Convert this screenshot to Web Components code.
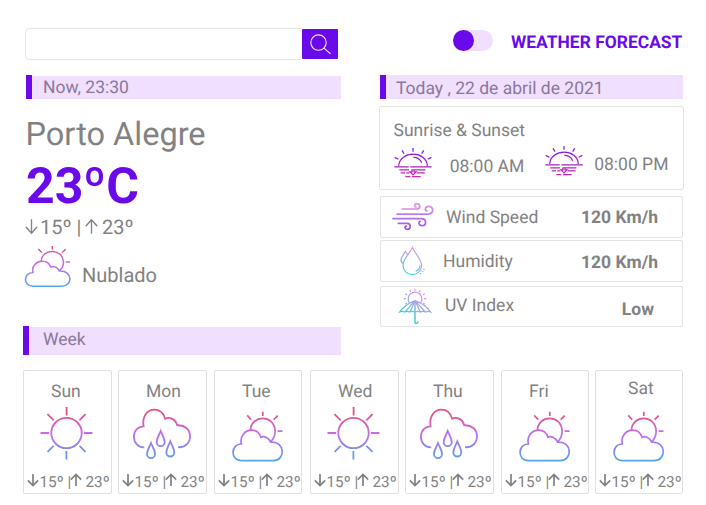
<!DOCTYPE html>
<html lang="pt-BR">
<head>
<meta charset="utf-8">
<title>Weather Forecast</title>
<style>
html,body{margin:0;background:#fff}
body{width:706px;height:505px;overflow:hidden;font-family:Roboto,sans-serif;color:#828282;text-rendering:geometricPrecision}
</style>
</head>
<body>
<weather-app></weather-app>
<script>
const define=(name,css,html)=>customElements.define(name,class extends HTMLElement{
  constructor(){
    super();
    const t=document.createElement('template');
    t.innerHTML=`<style>:host{display:block;box-sizing:border-box}${css}</style>${typeof html==='function'?html(this):html}`;
    this.attachShadow({mode:'open'}).append(t.content.cloneNode(true));
  }
});

const gradient=(id,stops,attrs='x1="0" y1="0" x2="0" y2="1"')=>
  `<defs><linearGradient id="${id}" gradientUnits="userSpaceOnUse" ${attrs}>${stops.map(([o,c])=>`<stop offset="${o}" stop-color="${c}"/>`).join('')}</linearGradient></defs>`;
const sky=gradient('g',[[0,'#e8507a'],[.15,'#e0568f'],[.5,'#c56cf0'],[.78,'#7f8cf0'],[1,'#4fa8ea']],'x1="0" y1="5" x2="0" y2="58"');
const aqua=[[0,'#ee8cf0'],[.45,'#a8a6e6'],[1,'#2bd8ce']];
const drop=(x,y)=>`<path d="M${x} ${y}C${x-1.6} ${y+4} ${x-4} ${y+7.4} ${x-4} ${y+11}a4 4.2 0 0 0 8 0C${x+4} ${y+7.4} ${x+1.6} ${y+4} ${x} ${y}Z"/>`;

const icons={
  sun:{box:'0 0 88 62',body:sky+`<g stroke="url(#g)" stroke-width="1.8"><circle cx="43.5" cy="30" r="15.2"/><path d="M43.6 4v8.6M43.4 48v8.6M17.5 30h8.6M60.8 30h8.6M24.4 11.2l6.4 6.2M62.6 11.2l-6.2 6.2M24.6 48.8l6-6M62.6 48.8l-6.2-6"/></g>`},
  rain:{box:'0 0 88 62',body:sky+`<g stroke="url(#g)" stroke-width="1.8"><path d="M26.2 44.3C20.3 44.6 15.9 39.7 15.9 33.8C15.9 27.6 20.4 23.3 25.6 23.4C23.8 13 29.5 6.7 36.3 6.7C41.5 6.7 45.5 10 47.2 15.7C51.8 13.6 57.8 16 59.2 22.3C66.5 21.6 72 26.6 72 33.2C72 40 67 44.8 60 44.2"/>${drop(33,40)}${drop(42.7,28)}${drop(52.3,38.3)}</g>`},
  cloud:{box:'0 0 88 62',body:sky+`<g stroke="url(#g)" stroke-width="1.7"><path d="M27.6 57.6C15.5 57.6 17 40.6 27.3 41C25.5 33 31.3 27.2 37.6 27.2C42 27.2 45.6 30 46.9 34.3C50.5 32.4 55 34.8 56.6 39.2C72 38.2 71.3 57.6 59.4 57.6ZM36.4 27.2C37 12 60 11 61.1 27.5C61.3 32 59.7 35.7 57 38.3M48.8 8.7v4.4M33.2 12.4l4 4.2M63.7 12.6l-4 4.1M63.7 28.2h4.8"/></g>`},
  dusk:{box:'70 140 116 94',body:gradient('g',[[0,'#7a1cf0'],[.5,'#a01ad0'],[1,'#cf28a8']],'x1="0" y1="143" x2="0" y2="232"')+
    `<g stroke="url(#g)" stroke-width="3.8"><path d="M84 197C87 150 168 150 170 197M128 171C139 171 149 177 153 187M71 199.5h43M119 199.5h64M86 209h29M122 209h42M90 218h13M107 218h9M138 218h24M104 229h15M124 229h26M127 143v11M94 150l6 10M159 150l-6 10M72 171l11 6M182 171l-11 6"/><path d="M124 210v5h-6l9 9 9-9h-6v-5"/></g>`},
  wind:{box:'64 36 130 86',body:gradient('g',[[0,'#e6a0d4'],[.45,'#bd7be6'],[1,'#8d4df6']],'x1="0" y1="36" x2="0" y2="122"')+
    `<g stroke="url(#g)" stroke-width="5.2" stroke-linecap="round"><path d="M98 57H142C154 56 153 41 142 41C134 41 133 50 139 51M82 72H177C193 71 193 49 177 49C166 49 164 62 172 63M70 86H156C172 86 171 107 157 107C147 107 145 96 152 94M86 100H112C125 100 125 118 113 118C105 118 104 108 110 108"/></g>`},
  humidity:{box:'88 168 82 90',body:gradient('g',aqua,'x1="150" y1="175" x2="110" y2="252"')+
    `<g stroke="url(#g)" stroke-width="3.4"><path d="M128 172C121 190 100 207 100 226A28 28 0 0 0 156 226C156 207 135 190 128 172ZM115 196L107 184C103 193 94 201 94 210C94 215 97 219 101 220M151 226C151 234 146 241 138 244M150 251h4M158 244h3M161 238h4M153 243h3"/></g>`},
  uv:{box:'84 294 102 112',body:gradient('g',aqua,'x1="160" y1="300" x2="105" y2="380"')+
    `<g stroke="url(#g)" stroke-width="3.6"><path d="M119 340A20.5 20.5 0 1 1 151 340M135 296v6M119 300l3 6M151 300l-3 6M106 311l5 4M164 311l-5 4M101 326h7M162 326h7M106 342l5-3M164 342l-5-3"/><path d="M135 332C115 340 98 352 89 366Q97 362 104 366Q112 362 119 366Q127 362 135 366Q143 362 151 366Q159 362 167 366Q175 362 182 366C174 352 156 340 135 332ZM135 332L105 366M135 332L120 366M135 332L151 366M135 332L166 366"/><path stroke-width="4.4" d="M135 332V396C135 402 144 402 144 394"/></g>`},
  down:{box:'0 0 12 14',body:'<path stroke="currentColor" stroke-width="var(--w,1.7)" d="M6 1v11.3M.8 7.3L6 12.5l5.2-5.2"/>'},
  up:{box:'0 0 12 14',body:'<path stroke="currentColor" stroke-width="var(--w,1.7)" d="M6 13V1.7M.8 6.7L6 1.5l5.2 5.2"/>'},
  search:{box:'0 0 36 30',body:'<g stroke="#f4eaff" stroke-width="1.1"><circle cx="16.5" cy="13.6" r="7.7"/><path d="M22 19.2l6.5 5.7"/></g>'}
};

define('wx-icon','svg{display:block;width:100%;height:100%;fill:none;overflow:visible}',
  el=>{const i=icons[el.getAttribute('name')];return `<svg viewBox="${el.getAttribute('box')||i.box}" preserveAspectRatio="none" aria-hidden="true">${i.body}</svg>`});

define('search-box',`:host{display:flex;width:313px;height:32px;margin-left:2px}
  .field{box-sizing:border-box;width:277px;border:1px solid #e6e6e6;border-right:0;border-radius:5px 0 0 5px}
  button{all:unset;width:36px;height:30px;margin-top:1px;background:#6a0aea;border-radius:1px}
  wx-icon{height:30px}`,'<div class="field"></div><button aria-label="Search"><wx-icon name="search"></wx-icon></button>');

define('section-bar',`:host{background:linear-gradient(#f0dfff,#f0dfff) 0 var(--inset,0px) no-repeat;border-left:6px solid #6a0aea;color:#8a7898;font-size:17.5px;line-height:22px;height:24px;white-space:pre}`,'<slot></slot>');

define('theme-toggle',`:host{flex:none;width:40px;height:21px;border-radius:11px;background:#f0dfff}
  i{display:block;width:21px;height:21px;border-radius:50%;background:#6a0aea}`,'<i></i>');

define('current-weather',`.city{font-size:32.5px;line-height:36px;margin:17px 0 0 2.5px}
  .temp{font-size:50px;line-height:50px;font-weight:700;color:#6a0aea;margin:10px 0 0 3px}
  .range{display:flex;font-size:20px;line-height:22px;margin:4px 0 0 2px;--w:1.2}
  .range wx-icon{flex:none;width:13px;height:17px;margin-top:2px}
  .range b{flex:none;font-weight:400}
  .sky{display:flex;margin-top:6.500px}
  .sky wx-icon{width:46px;height:42px;margin-left:2px}
  .sky p{font-size:20px;line-height:22px;margin:19.500px 0 0 11px}`,
  `<div class="city">Porto Alegre</div><div class="temp">23ºC</div>
  <div class="range"><wx-icon name="down"></wx-icon><b style="width:36.5px;margin-left:2px">15º</b><b style="width:8.5px">|</b><wx-icon name="up"></wx-icon><b style="margin-left:4px">23º</b></div>
  <div class="sky"><wx-icon name="cloud" box="18.5 7.5 51 51"></wx-icon><p>Nublado</p></div>`);

define('sun-card',`:host{height:84px;border:1px solid #e3e3e3;border-radius:3px;padding:13px 0 0 13.5px;font-size:17.5px;line-height:22px}
  .times{display:flex;align-items:flex-start;margin-top:3px}
  wx-icon{flex:none;width:38.7px;height:31.3px}`,
  `<div>Sunrise &amp; Sunset</div><div class="times"><wx-icon name="dusk" style="margin-top:2px"></wx-icon><span style="margin:11px 0 0 17.5px;width:95.3px">08:00 AM</span><wx-icon name="dusk"></wx-icon><span style="margin:9px 0 0 10.5px">08:00 PM</span></div>`);

define('metric-row',`:host{display:flex;width:303px;margin-left:1px;height:42px;border:1px solid #e3e3e3;border-radius:2px;font-size:17.5px;line-height:22px}
  .icon{width:var(--label)}
  .value{margin-left:auto;font-weight:700}`,
  '<div class="icon"><slot name="icon"></slot></div><slot></slot><div class="value"><slot name="value"></slot></div>');

define('day-card',`:host{width:89px;height:124px;border:1px solid #e1e1e1;border-radius:2px}
  .day{font-size:17.5px;line-height:22px;height:20px;padding:10px 0 0 27px}
  .icon{width:88px;height:62px;margin:2px 0 0 -1px}
  .range{display:flex;font-size:15.3px;line-height:18px;margin:7px 0 0 3px}
  .range wx-icon{flex:none;width:12px;height:14px;margin-top:1px}
  .range b{flex:none;font-weight:400;margin-top:.5px}`,
  el=>`<div class="day"><slot></slot></div><wx-icon class="icon" name="${el.getAttribute('sky')}"></wx-icon>
  <div class="range"><wx-icon name="down"></wx-icon><b style="width:28px;margin-left:.5px">15º</b><b style="width:.5px">|</b><wx-icon name="up" style="margin-left:2px"></wx-icon><b style="margin-left:3.5px">23º</b></div>`);

define('weather-app',`:host{padding:28px 22px 0 23px;width:706px;height:505px}
  .top{display:flex;justify-content:space-between;height:298px}
  .left{width:318px}
  .right{width:305px}
  .brand{display:flex;height:32px;padding-left:73.5px}
  h1{font-size:17.450px;line-height:22px;font-weight:700;color:#6a0aea;margin:4px 0 0 18.500px;white-space:nowrap}
  theme-toggle{margin-top:2px}
  .week{display:grid;grid-template-columns:95px 96px 96px 95px 96px 94px 88px;margin-top:15px}`,
  `<div class="top">
    <div class="left"><search-box></search-box>
      <section-bar style="margin:15px 0 0 3px;padding:2px 0 0 11px;--inset:1px">Now, 23:30</section-bar>
      <current-weather></current-weather></div>
    <div class="right"><div class="brand"><theme-toggle></theme-toggle><h1>WEATHER FORECAST</h1></div>
      <section-bar style="margin:15px 1px 0;padding:3px 0 0 10px">Today , 22 de abril de 2021</section-bar>
      <sun-card style="margin-top:7px"></sun-card>
      <metric-row style="margin-top:6px;--label:65px"><wx-icon slot="icon" name="wind" style="width:43.3px;height:28.7px;margin:5px 0 0 10.3px"></wx-icon><span style="margin-top:10px">Wind Speed</span><span slot="value" style="display:block;margin:10px 24px 0 0">120 Km/h</span></metric-row>
      <metric-row style="margin-top:2px;--label:62px"><wx-icon slot="icon" name="humidity" style="width:27.3px;height:30px;margin:5px 0 0 18.3px"></wx-icon><span style="margin-top:10px">Humidity</span><span slot="value" style="display:block;margin:11px 24px 0 0">120 Km/h</span></metric-row>
      <metric-row style="margin-top:4px;height:41px;--label:64px"><wx-icon slot="icon" name="uv" style="width:34px;height:37.3px;margin:1px 0 0 17px"></wx-icon><span style="margin-top:8px">UV Index</span><span slot="value" style="display:block;margin:12px 28px 0 0">Low</span></metric-row>
    </div></div>
  <section-bar style="width:318px;height:29px;padding:3px 0 0 14px;--inset:1px">Week</section-bar>
  <div class="week"><day-card sky="sun">Sun</day-card><day-card sky="rain">Mon</day-card><day-card sky="cloud" style="width:88px">Tue</day-card><day-card sky="sun">Wed</day-card><day-card sky="rain">Thu</day-card><day-card sky="cloud" style="width:88px">Fri</day-card><day-card sky="cloud" style="width:88px"><span style="display:block;margin:-3px 0 0 5px">Sat</span></day-card></div>`);
</script>
</body>
</html>
